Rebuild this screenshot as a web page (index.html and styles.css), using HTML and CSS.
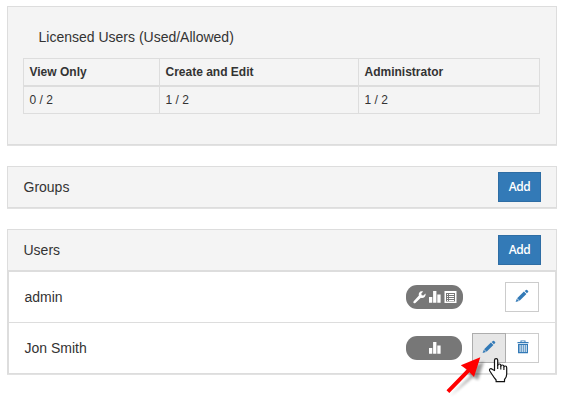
FILE: index.html
```html
<!DOCTYPE html>
<html lang="en">
<head>
<meta charset="utf-8">
<title>Users</title>
<link rel="stylesheet" href="styles.css">
</head>
<body>
<svg class="defs" aria-hidden="true">
  <symbol id="pencil" viewBox="0 0 14 14">
    <path d="M9.6 2.100 11 .9q.6-.4 1.100 0l1 1q.5.5 0 1.100L11.900 4.300zM8.900 2.600l2.500 2.300-6.800 6.800-2.500-2.500zM1.800 9.800l2.200 2.200-3.400 1z"/>
  </symbol>
  <symbol id="bars" viewBox="0 0 12 12">
    <path d="M0 6h3.300v5.700H0zM4.100 0h3.300v11.700H4.100zM8.300 3.500h3.300v8.200H8.300z"/>
  </symbol>
</svg>
<section class="panel licenses">
  <h2 class="title">Licensed Users (Used/Allowed)</h2>
  <table class="license-table">
    <colgroup><col class="c1"><col class="c2"><col class="c3"></colgroup>
    <thead><tr><th>View Only</th><th>Create and Edit</th><th>Administrator</th></tr></thead>
    <tbody><tr><td>0 / 2</td><td>1 / 2</td><td>1 / 2</td></tr></tbody>
  </table>
</section>
<section class="panel">
  <header class="heading"><h2 class="title">Groups</h2><button class="add">Add</button></header>
</section>
<section class="panel users">
  <header class="heading"><h2 class="title">Users</h2><button class="add">Add</button></header>
  <ul class="list">
    <li class="row">
      <span class="name">admin</span>
      <span class="badge badge-full">
        <svg width="13" height="13" viewBox="0 0 13 13"><path d="M12.500 2.600 10.400 4.500 8.700 4.300 8.300 2.500 10.200.5Q7.600-.3 6.200 1.700 5.500 2.900 5.900 4.500L.7 10.300Q0 11.200.7 12 1.500 12.700 2.400 12L7.900 6.800Q10 7.400 11.600 6 12.900 4.600 12.500 2.600z"/></svg>
        <svg width="12" height="12"><use href="#bars"/></svg>
        <svg width="13" height="12" viewBox="0 0 13 12"><path fill-rule="evenodd" d="M.5 0h12v12H.5zM2 2v8.600h9V2zM3 3h1v1H3zM5 3h5v1H5zM3 5h1v1H3zM5 5h5v1H5zM3 7h1v1H3zM5 7h5v1H5zM3 9h1v1H3zM5 9h5v1H5z"/></svg>
      </span>
      <span class="actions"><button class="tool" aria-label="Edit admin"><svg width="14" height="14"><use href="#pencil"/></svg></button></span>
    </li>
    <li class="row">
      <span class="name">Jon Smith</span>
      <span class="badge"><svg width="12" height="12"><use href="#bars"/></svg></span>
      <span class="actions">
        <button class="tool active" aria-label="Edit Jon Smith"><svg width="14" height="14"><use href="#pencil"/></svg></button><button class="tool trash" aria-label="Delete Jon Smith"><svg width="12" height="14" viewBox="0 0 12 14"><path fill-rule="evenodd" d="M.5 2h3V.4h5V2h3v1.300H.5zM4.500 1.300V2h3v-.7zM1 4h10v9.300H1zM2.600 5v7h1V5zM4.700 5v7h1V5zM6.700 5v7h1V5zM8.700 5v7h1V5z"/></svg></button>
      </span>
    </li>
  </ul>
</section>
<svg class="pointer" width="70" height="50" viewBox="442 352 70 50">
  <path class="arrow-shadow" d="M450 396.500 470.500 376 466 369.500 484 361.500 478 380 473 377z"/>
  <path class="arrow" d="M446.500 390.200 466.700 369.500 460.800 365.200 480.300 357.200 474 377 469.500 372.300 449.300 393z"/>
  <path class="hand" d="M494.500 370.500V360.300q0-1.700 1.600-1.700t1.600 1.700v5.200q0-1.500 1.600-1.500t1.500 1.500v.7q.2-1.200 1.600-1.200t1.500 1.500v.5q.2-1 1.400-1 1.400 0 1.400 1.700v6.500q0 3-2.200 5.300v2.200h-8.400v-1.700q-2.200-2.500-4-5.500l-2.300-3.500q-.8-1.700.5-2.200 1.100-.4 2.200.7z"/>
  <path class="fingers" d="M497.700 365v4M500.800 366v3.500M503.900 367v3"/>
</svg>
</body>
</html>
```
FILE: styles.css
```css
* { box-sizing: border-box; }
body {
  position: relative;
  height: 400px;
  margin: 0;
  padding: 6px 4px 0 7px;
  background: #fff;
  color: #333;
  font: 14px/20px "Liberation Sans", Arial, sans-serif;
  overflow: hidden;
}
.defs { display: none; }
.panel {
  width: 550px;
  margin-bottom: 21px;
  background: #f4f4f4;
  border: 1px solid #ddd;
  box-shadow: 0 1px 0 #e2e2e2;
}
.licenses { height: 139px; padding: 20px 15px 0; }
.licenses .title { margin: 0 0 11px 15.500px; }
.title { margin: 0; font-size: 14px; font-weight: 400; }
.heading .title { padding-left: .5px; }
.license-table {
  width: 517px;
  table-layout: fixed;
  border-collapse: collapse;
  font-size: 12px;
  line-height: 17px;
}
.c1 { width: 136px; }
.c2 { width: 199px; }
.c3 { width: 181px; }
th, td { padding: 5px 5px 3px 5.500px; border: 1px solid #ddd; text-align: left; }
th { height: 27px; border-bottom-width: 2px; }
td { height: 28px; padding-bottom: 4px; }
.heading {
  display: flex;
  align-items: center;
  justify-content: space-between;
  height: 40px;
  padding: 0 15px;
}
.add {
  width: 43px;
  height: 30px;
  padding: 0;
  background: #337ab7;
  border: 1px solid #2e6da4;
  color: #fff;
  font: 600 12px/18px "Open Sans", sans-serif;
  letter-spacing: -.4px;
}
.list {
  margin: 0;
  padding: 0;
  list-style: none;
  background: #fff;
  border: solid #ddd;
  border-width: 2px 1px 0;
}
.row { display: flex; align-items: center; height: 50px; padding: 0 16px 0 15px; }
.row + .row { height: 51px; border-top: 1px solid #ddd; }
.name { flex: 1; padding-left: .5px; }
.badge {
  display: flex;
  align-items: center;
  justify-content: center;
  gap: 3px;
  width: 56px;
  height: 24px;
  padding-left: 1px;
  border-radius: 11px;
  background: #777;
  fill: #fff;
}
.badge-full { width: 57px; }
.actions { display: flex; justify-content: flex-end; width: 77px; }
.badge-full + .actions { width: 76px; }
.tool {
  display: flex;
  align-items: center;
  justify-content: center;
  width: 34px;
  height: 30px;
  padding: 0;
  background: #fff;
  border: 1px solid #ccc;
  fill: #337ab7;
}
.tool + .tool { margin-left: -1px; }
.tool svg { margin-top: -2px; }
.trash { padding-left: 2px; }
.active { position: relative; background: #e6e6e6; border-color: #adadad; }
.pointer { position: absolute; left: 442px; top: 352px; pointer-events: none; }
.arrow { fill: #f00; }
.arrow-shadow { fill: #000; opacity: .4; filter: blur(1.500px); }
.hand { fill: #fff; stroke: #111; stroke-width: 1.200; stroke-linejoin: round; }
.fingers { fill: none; stroke: #111; stroke-width: 1.100; }
```
